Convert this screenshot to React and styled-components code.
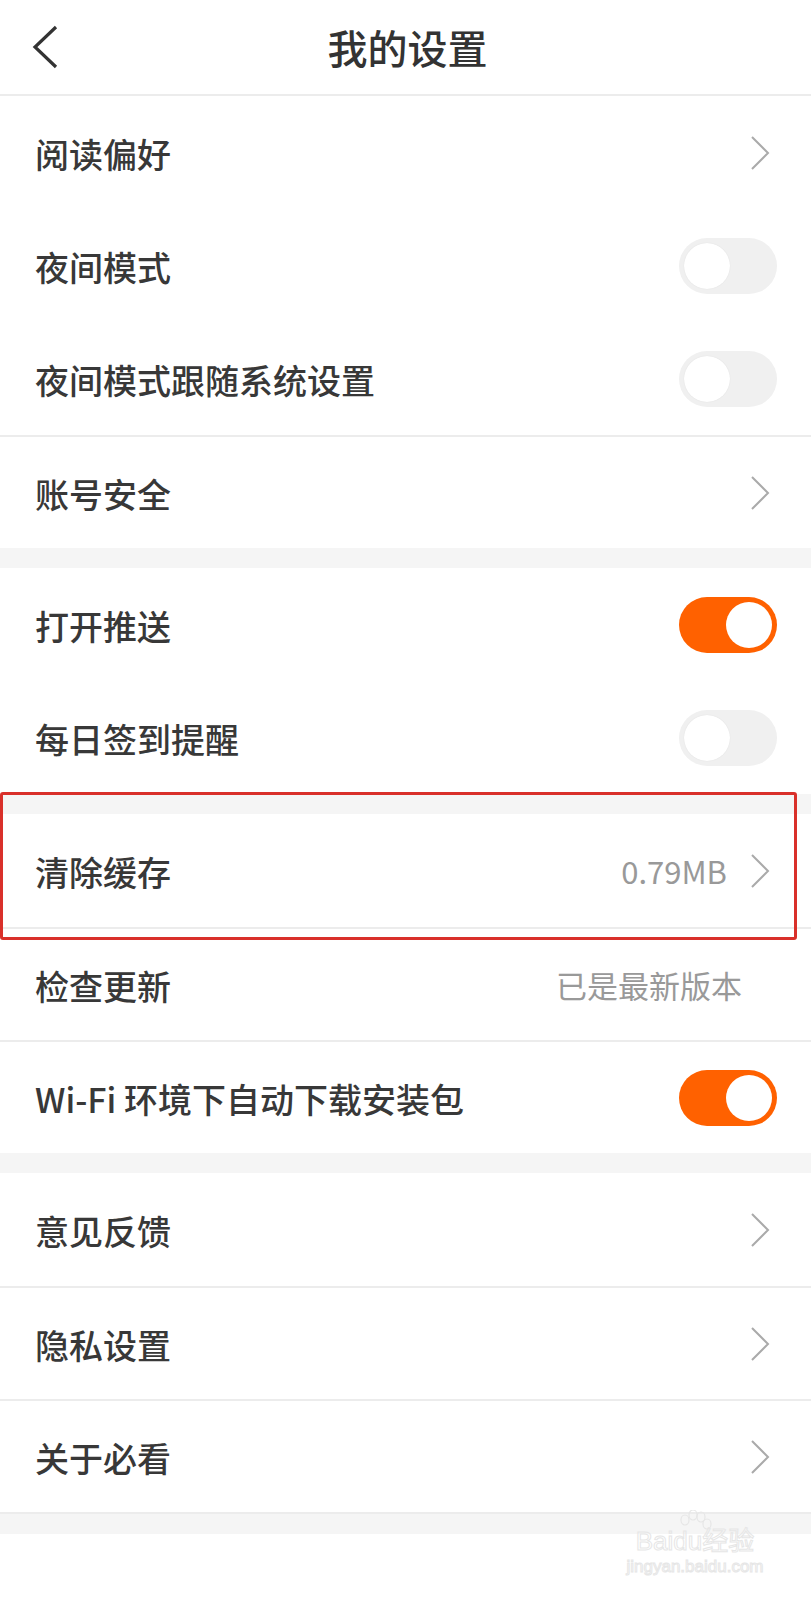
import React from 'react';
import styled, { createGlobalStyle } from 'styled-components';

const GlobalStyle = createGlobalStyle`
  body {
    margin: 0;
    background: #fff;
    font-family: "Noto Sans CJK SC", "Noto Sans", sans-serif;
  }
`

const Page = styled.div`
  position: relative;
  width: 811px;
  min-height: 1600px;
  background: #fff;
`
const Header = styled.div`
  height: 96px;
  display: flex;
  align-items: center;
  justify-content: center;
  position: relative;
  border-bottom: 2px solid #ececec;
  box-sizing: border-box;
`
const BackButton = styled.div`
  position: absolute;
  left: 30px;
  top: 24px;
  width: 32px;
  height: 46px;
`
const Title = styled.h1`
  margin: 0 0 0 4px;
  font-size: 40px;
  font-weight: 500;
  color: #333;
`
const Gap = styled.div`
  height: 20px;
  background: #f5f5f5;
  border-top: ${p => (p.closed ? '2px solid #ececec' : 'none')};
`
const Group = styled.div`
  background: #fff;
`
const Row = styled.div`
  height: 113px;
  box-sizing: border-box;
  display: flex;
  align-items: center;
  padding: 0 34px 0 35px;
  border-top: ${p => (p.divided ? '2px solid #ececec' : 'none')};
`
const Label = styled.span`
  flex: 1;
  font-size: 34px;
  font-weight: 500;
  color: #383838;
  margin-top: 2px;
`
const Value = styled.span`
  font-size: 31px;
  color: #999;
  margin-right: ${p => (p.end ? '35px' : '22px')};
`
const Arrow = styled.div`
  width: 28px;
  height: 36px;
  display: flex;
  align-items: center;
`
const Track = styled.div`
  width: 98px;
  height: 56px;
  border-radius: 28px;
  box-sizing: border-box;
  padding: 5px;
  display: flex;
  justify-content: ${p => (p.on ? 'flex-end' : 'flex-start')};
  background: ${p => (p.on ? '#ff6100' : '#f0f0f0')};
`
const Knob = styled.div`
  width: 46px;
  height: 46px;
  border-radius: 50%;
  background: #fff;
  box-shadow: ${p => (p.on ? 'none' : '0 0 1px rgba(0,0,0,0.12)')};
`
const Marker = styled.div`
  position: absolute;
  left: 0;
  top: 792px;
  width: 797px;
  height: 148px;
  box-sizing: border-box;
  border: 3px solid #d9302a;
  border-radius: 3px;
  pointer-events: none;
`
const Watermark = styled.div`
  position: absolute;
  left: 620px;
  top: 1510px;
  width: 150px;
  display: flex;
  flex-direction: column;
  align-items: center;
  color: transparent;
  -webkit-text-stroke: 1px #e6e6e6;
  font-family: "Liberation Sans", "Noto Sans CJK SC", sans-serif;
  pointer-events: none;
`
const MarkTop = styled.div`
  font-size: 26px;
  line-height: 30px;
  margin-top: 8px;
`
const MarkBottom = styled.div`
  font-size: 17px;
  line-height: 22px;
`

const Chevron = () => (
  <Arrow>
    <svg width="22" height="36" viewBox="0 0 22 36">
      <path d="M3 2 L19 18 L3 34" fill="none" stroke="#aaa" strokeWidth="2" />
    </svg>
  </Arrow>
)

const Switch = ({ on }) => (
  <Track on={on ? 1 : 0}>
    <Knob on={on ? 1 : 0} />
  </Track>
)

const groups = [
  [
    { label: '阅读偏好', arrow: true },
    { label: '夜间模式', toggle: false },
    { label: '夜间模式跟随系统设置', toggle: false },
    { label: '账号安全', arrow: true, divided: true },
  ],
  [
    { label: '打开推送', toggle: true },
    { label: '每日签到提醒', toggle: false },
  ],
  [
    { label: '清除缓存', value: '0.79MB', arrow: true },
    { label: '检查更新', value: '已是最新版本', divided: true },
    { label: 'Wi-Fi 环境下自动下载安装包', toggle: true, divided: true },
  ],
  [
    { label: '意见反馈', arrow: true },
    { label: '隐私设置', arrow: true, divided: true },
    { label: '关于必看', arrow: true, divided: true },
  ],
];

export default function App() {
  return (
    <Page>
      <GlobalStyle />
      <Header>
        <BackButton>
          <svg width="32" height="46" viewBox="0 0 32 46">
            <path d="M26 3 L5 23 L26 43" fill="none" stroke="#333" strokeWidth="3.2" />
          </svg>
        </BackButton>
        <Title>我的设置</Title>
      </Header>
      {groups.map((rows, gi) => (
        <React.Fragment key={gi}>
          {gi > 0 && <Gap />}
          <Group>
            {rows.map(r => (
              <Row key={r.label} divided={r.divided ? 1 : 0}>
                <Label>{r.label}</Label>
                {r.value && <Value end={r.arrow ? 0 : 1}>{r.value}</Value>}
                {r.arrow && <Chevron />}
                {r.toggle !== undefined && <Switch on={r.toggle} />}
              </Row>
            ))}
          </Group>
        </React.Fragment>
      ))}
      <Gap closed={1} />
      <Marker />
      <Watermark>
        <svg width="44" height="22" viewBox="0 0 44 22" style={{ marginBottom: -14 }}>
          <g fill="none" stroke="#e6e6e6" strokeWidth="1.2">
            <ellipse cx="12" cy="10" rx="4" ry="5" />
            <ellipse cx="20" cy="5" rx="4" ry="5" />
            <ellipse cx="28" cy="7" rx="4" ry="5" />
            <ellipse cx="34" cy="14" rx="4" ry="5" />
          </g>
        </svg>
        <MarkTop>Baidu经验</MarkTop>
        <MarkBottom>jingyan.baidu.com</MarkBottom>
      </Watermark>
    </Page>
  );
}
